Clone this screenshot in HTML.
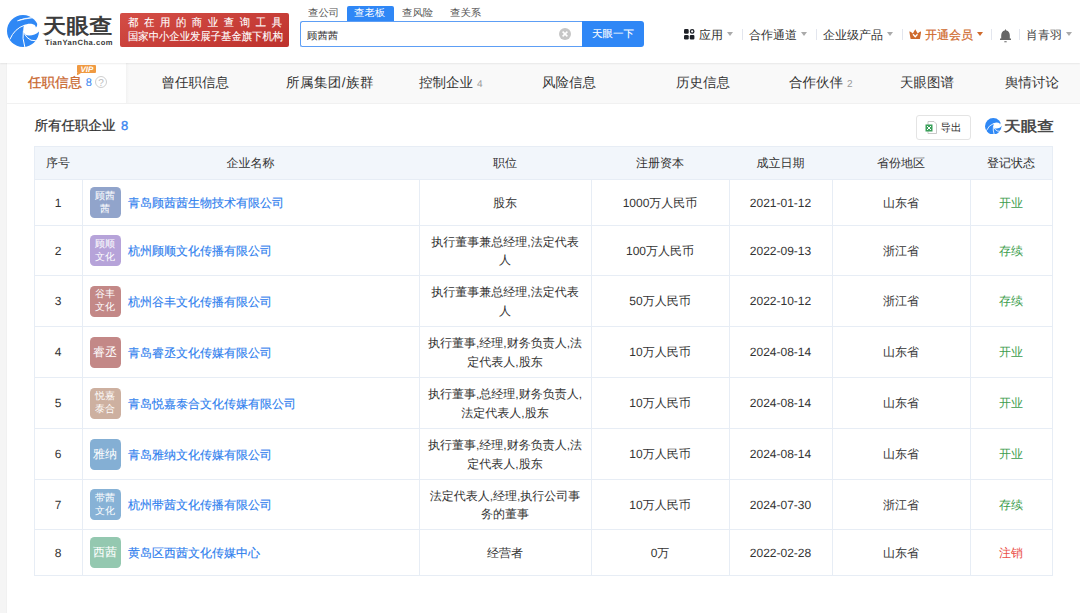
<!DOCTYPE html>
<html><head><meta charset="utf-8">
<style>
*{box-sizing:border-box;margin:0;padding:0}
html,body{width:1080px;height:613px;overflow:hidden;background:#f5f5f5;font-family:"Liberation Sans",sans-serif;color:#333;text-rendering:geometricPrecision}
.abs{position:absolute}
#hdr{position:absolute;left:0;top:0;width:1080px;height:63px;background:#fff;box-shadow:0 1px 1.5px rgba(0,0,0,0.07);z-index:2}
#card{position:absolute;left:7px;top:63px;width:1073px;height:560px;background:#fff;box-shadow:-1px 0 1px rgba(0,0,0,0.015)}
#tabbar{position:absolute;left:7px;top:63px;width:1073px;height:41px;background:#f9f9f9;border-bottom:1px solid #f1f1f1}
.tab{position:absolute;top:63px;height:40px;line-height:40px;font-size:13.5px;color:#333;white-space:nowrap}
.nav{position:absolute;top:24.5px;height:20px;line-height:20px;font-size:12px;color:#333;white-space:nowrap}
.caret{position:absolute;width:0;height:0;border-left:3px solid transparent;border-right:3px solid transparent;border-top:4px solid #aaa}
.sep{position:absolute;top:29px;width:1px;height:11px;background:#e3e6ee}
.hline{position:absolute;left:34px;width:1019px;height:1px;background:#e7edf5}
.vline{position:absolute;width:1px;background:#e7edf5}
.cell{position:absolute;display:flex;align-items:center;justify-content:center;text-align:center;font-size:12px;color:#333;line-height:18.5px}
.cell>span{position:relative;top:0.5px}
.badge{position:absolute;left:89.5px;width:31px;height:31px;border-radius:4.5px;color:#fff;font-size:10px;line-height:13px;display:flex;align-items:center;justify-content:center;text-align:center;padding:0 2px}
.badge.one{font-size:12px}
.name{position:absolute;left:128px;font-size:12px;color:#2f80ee;white-space:nowrap;line-height:16px;-webkit-text-stroke:0.15px #2f80ee}
.g{color:#3d9d4d}.r{color:#ea5048}
</style></head><body>
<div id="hdr">
<!-- logo -->
<svg class="abs" style="left:7px;top:15px" width="32" height="32" viewBox="0 0 32 32">
<circle cx="16" cy="16" r="16" fill="#2f88f5"/>
<path d="M17 10.2 C20 8.3 25 8.2 27.4 9.8 C28.4 10.6 28.9 11.6 28.8 12.5 C29.6 12.2 30.2 10.5 30.4 8.5 L33 8.5 L33 14.7 C31.5 18.5 26 20.6 22 20.5 C19 20.4 17 18.8 16.5 17 C16.1 15 16.3 12.5 17 10.2 Z" fill="#fff"/>
<path d="M2.8 24.5 Q7.5 13.5 17.6 10.2" stroke="#fff" stroke-width="1" fill="none"/>
<path d="M16.4 15.5 Q15 23 17.8 32" stroke="#fff" stroke-width="1" fill="none"/>
<path d="M17.3 18.6 Q19.5 23 24 25.2 Q28.5 26.5 32 24.5" stroke="#fff" stroke-width="1" fill="none"/>
<path d="M10.5 5.8 Q17 2.8 26 2.6 Q17.5 3.8 10.5 5.8 Z" stroke="#fff" stroke-width="0.7" fill="#fff"/>
</svg>
<div class="abs" style="left:43px;top:13px;font-size:20.5px;line-height:28px;font-weight:700;color:#3c3c3c;transform:scaleX(1.13);transform-origin:left top;white-space:nowrap">天眼查</div>
<div class="abs" style="left:45px;top:38px;font-size:7.6px;line-height:10px;font-weight:700;color:#3a3a3a;letter-spacing:0.5px;white-space:nowrap">TianYanCha.com</div>
<!-- red banner -->
<div class="abs" style="left:120px;top:13px;width:169px;height:34px;border-radius:2px;background:linear-gradient(165deg,#d44e46,#bd312c)"></div>
<div class="abs" style="left:128px;top:16px;font-size:11px;line-height:14px;color:#fff;letter-spacing:5.98px;white-space:nowrap;-webkit-text-stroke:0.1px #fff;transform:scaleX(0.94);transform-origin:left top">都在用的商业查询工具</div>
<div class="abs" style="left:128px;top:29.5px;font-size:11px;line-height:14px;color:#fff;white-space:nowrap;-webkit-text-stroke:0.1px #fff;transform:scaleX(0.94);transform-origin:left top">国家中小企业发展子基金旗下机构</div>
<!-- search tabs -->
<div class="abs" style="left:308px;top:6px;font-size:10px;line-height:16px;transform:scaleX(1.04);transform-origin:left top;color:#555">查公司</div>
<div class="abs" style="left:347px;top:6px;width:47px;height:16px;background:#2f87f6;border-radius:2px 2px 0 0"></div>
<div class="abs" style="left:354px;top:6px;font-size:10px;line-height:16px;transform:scaleX(1.04);transform-origin:left top;color:#fff">查老板</div>
<div class="abs" style="left:402px;top:6px;font-size:10px;line-height:16px;transform:scaleX(1.04);transform-origin:left top;color:#555">查风险</div>
<div class="abs" style="left:450px;top:6px;font-size:10px;line-height:16px;transform:scaleX(1.04);transform-origin:left top;color:#555">查关系</div>
<!-- search box -->
<div class="abs" style="left:299.5px;top:21px;width:284.5px;height:26.2px;border:1.5px solid #5d9ef5;border-right:none;border-radius:2.5px 0 0 2.5px;background:#fff"></div>
<div class="abs" style="left:307px;top:28.5px;font-size:10px;line-height:16px;color:#333;transform:scaleX(1.04);transform-origin:left top">顾茜茜</div>
<div class="abs" style="left:559px;top:28px;width:12px;height:12px;border-radius:50%;background:#c6c6c6"></div>
<svg class="abs" style="left:559px;top:28px" width="12" height="12" viewBox="0 0 12 12"><path d="M3.6 3.6 L8.4 8.4 M8.4 3.6 L3.6 8.4" stroke="#fff" stroke-width="1.5"/></svg>
<div class="abs" style="left:582px;top:21px;width:62px;height:26px;background:#2f87f6;border-radius:0 3px 3px 0"></div>
<div class="abs" style="left:592px;top:26.5px;font-size:10px;line-height:16px;color:#fff;transform:scaleX(1.05);transform-origin:left top;-webkit-text-stroke:0.1px #fff">天眼一下</div>
<!-- right nav -->
<svg class="abs" style="left:684px;top:29px" width="11" height="11" viewBox="0 0 11 11">
<rect x="0" y="0.1" width="4.7" height="4.7" rx="1.3" fill="#1d2026"/>
<circle cx="8.15" cy="2.45" r="1.75" fill="none" stroke="#1d2026" stroke-width="1.25"/>
<rect x="0" y="6" width="4.7" height="4.6" rx="1.3" fill="#1d2026"/>
<rect x="5.8" y="6" width="4.6" height="4.6" rx="1.1" fill="#1d2026"/>
</svg>
<div class="nav" style="left:699px">应用</div>
<div class="caret" style="left:727px;top:32px"></div>
<div class="sep" style="left:742px"></div>
<div class="nav" style="left:749px">合作通道</div>
<div class="caret" style="left:801px;top:32px"></div>
<div class="sep" style="left:816px"></div>
<div class="nav" style="left:823px">企业级产品</div>
<div class="caret" style="left:887px;top:32px"></div>
<div class="sep" style="left:902px"></div>
<svg class="abs" style="left:908.5px;top:28.5px" width="12.5" height="10.5" viewBox="0 0 12.5 10.5">
<path d="M0.3 2.6 Q1.2 2.3 2 3 L3.8 4.5 L6.25 0.3 L8.7 4.5 L10.5 3 Q11.3 2.3 12.2 2.6 L11 9.6 Q10.8 10.3 10 10.3 L2.5 10.3 Q1.7 10.3 1.5 9.6 Z" fill="#cf6a2c"/>
<path d="M4 5.2 L6.25 7.8 L8.5 5.2" stroke="#fff" stroke-width="1.3" fill="none"/>
</svg>
<div class="nav" style="left:925px;color:#cf6a2c;-webkit-text-stroke:0.2px #cf6a2c">开通会员</div>
<div class="caret" style="left:977px;top:32px;border-top-color:#cf6a2c"></div>
<div class="sep" style="left:991px"></div>
<svg class="abs" style="left:1000px;top:28.6px" width="11" height="14" viewBox="0 0 11 14">
<path d="M5.5 0 L6.3 1.4 Q9.8 2.2 9.8 6.5 L9.8 9.4 L11 9.6 L11 11 L0 11 L0 9.6 L1.2 9.4 L1.2 6.5 Q1.2 2.2 4.7 1.4 Z" fill="#666"/>
<rect x="4.2" y="12.2" width="2.6" height="1.1" rx="0.5" fill="#666"/>
</svg>
<div class="sep" style="left:1019px"></div>
<div class="nav" style="left:1026px;color:#444">肖青羽</div>
<div class="caret" style="left:1066px;top:32px"></div>

</div>
<div id="card"></div>
<div id="tabbar"></div>
<div class="abs" style="left:7px;top:63px;width:119px;height:40px;background:#fff"></div>
<div class="abs" style="left:126px;top:63px;width:3px;height:40px;background:linear-gradient(90deg,#f2f2f2,#f9f9f9)"></div>
<div class="abs" style="left:77.4px;top:64.5px;width:19px;height:8.3px;background:#f09a42;border-radius:1px"></div>
<svg class="abs" style="left:77.4px;top:72.5px" width="4" height="2.5" viewBox="0 0 4 2.5"><path d="M0 0 L4 0 L0 2.5 Z" fill="#f09a42"/></svg>
<div class="abs" style="left:80.5px;top:65px;font-size:8px;line-height:9px;font-weight:700;font-style:italic;color:#fff;white-space:nowrap">VIP</div>
<div class="tab" style="left:28px;color:#c96830;-webkit-text-stroke:0.3px #c96830">任职信息</div>
<div class="abs" style="left:85.8px;top:76.3px;font-size:11px;line-height:14px;color:#3a86f0">8</div>
<div class="abs" style="left:95px;top:76px;width:12px;height:12px;border:1px solid #cfcfcf;border-radius:50%"></div><div class="abs" style="left:95px;top:76.5px;width:12px;font-size:10px;line-height:14px;text-align:center;color:#bdbdbd">?</div>
<div class="tab" style="left:161.5px">曾任职信息</div>
<div class="tab" style="left:286px;letter-spacing:0.45px">所属集团/族群</div>
<div class="tab" style="left:419px">控制企业<span style="font-size:10px;color:#999;margin-left:4px">4</span></div>
<div class="tab" style="left:542px">风险信息</div>
<div class="tab" style="left:676px">历史信息</div>
<div class="tab" style="left:789px">合作伙伴<span style="font-size:10px;color:#999;margin-left:4px">2</span></div>
<div class="tab" style="left:900px">天眼图谱</div>
<div class="tab" style="left:1005px">舆情讨论</div>
<div class="abs" style="left:34.5px;top:116px;font-size:13.5px;line-height:20px;color:#333;-webkit-text-stroke:0.25px #333;white-space:nowrap">所有任职企业</div>
<div class="abs" style="left:121px;top:115.5px;font-size:13px;line-height:20px;color:#3a86f0;-webkit-text-stroke:0.35px #3a86f0">8</div>
<div class="abs" style="left:916px;top:115px;width:55px;height:25px;border:1px solid #e4e4e4;border-radius:3px;background:#fff"></div>
<svg class="abs" style="left:925px;top:121px" width="12" height="13" viewBox="0 0 12 13">
<path d="M3 0.5 L9 0.5 L11.5 3 L11.5 12.5 L3 12.5 Z" fill="#fff" stroke="#bbb" stroke-width="0.8"/>
<rect x="0.5" y="3.5" width="7" height="7" fill="#3aa05a"/>
<path d="M2 5 L6 9 M6 5 L2 9" stroke="#fff" stroke-width="1"/>
</svg>
<div class="abs" style="left:940.5px;top:119.5px;font-size:10.5px;line-height:16px;color:#333">导出</div>
<svg class="abs" style="left:985px;top:117.5px" width="16.5" height="16.5" viewBox="0 0 32 32">
<circle cx="16" cy="16" r="16" fill="#2f88f5"/>
<path d="M17 10.2 C20 8.3 25 8.2 27.4 9.8 C28.4 10.6 28.9 11.6 28.8 12.5 C29.6 12.2 30.2 10.5 30.4 8.5 L33 8.5 L33 14.7 C31.5 18.5 26 20.6 22 20.5 C19 20.4 17 18.8 16.5 17 C16.1 15 16.3 12.5 17 10.2 Z" fill="#fff"/>
<path d="M2.8 24.5 Q7.5 13.5 17.6 10.2" stroke="#fff" stroke-width="1.6" fill="none"/>
<path d="M16.4 15.5 Q15 23 17.8 32" stroke="#fff" stroke-width="1.6" fill="none"/>
<path d="M17.3 18.6 Q19.5 23 24 25.2 Q28.5 26.5 32 24.5" stroke="#fff" stroke-width="1.6" fill="none"/>
</svg>
<div class="abs" style="left:1003.5px;top:116px;font-size:14px;line-height:20px;font-weight:700;color:#4a4a4a;transform:scaleX(1.19);transform-origin:left top;white-space:nowrap">天眼查</div>

<div class="abs" style="left:34px;top:146px;width:1019px;height:33px;background:#f2f6fb"></div>
<div class="hline" style="top:146px"></div>
<div class="hline" style="top:179px"></div>
<div class="hline" style="top:225px"></div>
<div class="hline" style="top:275px"></div>
<div class="hline" style="top:326px"></div>
<div class="hline" style="top:377px"></div>
<div class="hline" style="top:428px"></div>
<div class="hline" style="top:479px"></div>
<div class="hline" style="top:529px"></div>
<div class="hline" style="top:575px"></div>
<div class="vline" style="left:34px;top:146px;height:430px"></div>
<div class="vline" style="left:82px;top:179px;height:397px"></div>
<div class="vline" style="left:419px;top:179px;height:397px"></div>
<div class="vline" style="left:591px;top:179px;height:397px"></div>
<div class="vline" style="left:729px;top:179px;height:397px"></div>
<div class="vline" style="left:832px;top:179px;height:397px"></div>
<div class="vline" style="left:970px;top:179px;height:397px"></div>
<div class="vline" style="left:1052px;top:146px;height:430px"></div>
<div class="cell" style="left:34px;top:147px;width:48px;height:32px"><span>序号</span></div>
<div class="cell" style="left:82px;top:147px;width:337px;height:32px"><span>企业名称</span></div>
<div class="cell" style="left:419px;top:147px;width:172px;height:32px"><span>职位</span></div>
<div class="cell" style="left:591px;top:147px;width:138px;height:32px"><span>注册资本</span></div>
<div class="cell" style="left:729px;top:147px;width:103px;height:32px"><span>成立日期</span></div>
<div class="cell" style="left:832px;top:147px;width:138px;height:32px"><span>省份地区</span></div>
<div class="cell" style="left:970px;top:147px;width:82px;height:32px"><span>登记状态</span></div>
<div class="cell" style="left:34px;top:180px;width:48px;height:45px"><span>1</span></div>
<div class="badge" style="top:187.0px;background:#91a4cb">顾茜<br>茜</div>
<div class="name" style="top:195.0px">青岛顾茜茜生物技术有限公司</div>
<div class="cell" style="left:419px;top:180px;width:172px;height:45px"><span>股东</span></div>
<div class="cell" style="left:591px;top:180px;width:138px;height:45px"><span>1000万人民币</span></div>
<div class="cell" style="left:729px;top:180px;width:103px;height:45px"><span>2021-01-12</span></div>
<div class="cell" style="left:832px;top:180px;width:138px;height:45px"><span>山东省</span></div>
<div class="cell g" style="left:970px;top:180px;width:82px;height:45px"><span>开业</span></div>
<div class="cell" style="left:34px;top:226px;width:48px;height:49px"><span>2</span></div>
<div class="badge" style="top:235.0px;background:#b6a3d9">顾顺<br>文化</div>
<div class="name" style="top:243.0px">杭州顾顺文化传播有限公司</div>
<div class="cell" style="left:419px;top:226px;width:172px;height:49px"><span>执行董事兼总经理,法定代表<br>人</span></div>
<div class="cell" style="left:591px;top:226px;width:138px;height:49px"><span>100万人民币</span></div>
<div class="cell" style="left:729px;top:226px;width:103px;height:49px"><span>2022-09-13</span></div>
<div class="cell" style="left:832px;top:226px;width:138px;height:49px"><span>浙江省</span></div>
<div class="cell g" style="left:970px;top:226px;width:82px;height:49px"><span>存续</span></div>
<div class="cell" style="left:34px;top:276px;width:48px;height:50px"><span>3</span></div>
<div class="badge" style="top:285.5px;background:#c38887">谷丰<br>文化</div>
<div class="name" style="top:293.5px">杭州谷丰文化传播有限公司</div>
<div class="cell" style="left:419px;top:276px;width:172px;height:50px"><span>执行董事兼总经理,法定代表<br>人</span></div>
<div class="cell" style="left:591px;top:276px;width:138px;height:50px"><span>50万人民币</span></div>
<div class="cell" style="left:729px;top:276px;width:103px;height:50px"><span>2022-10-12</span></div>
<div class="cell" style="left:832px;top:276px;width:138px;height:50px"><span>浙江省</span></div>
<div class="cell g" style="left:970px;top:276px;width:82px;height:50px"><span>存续</span></div>
<div class="cell" style="left:34px;top:327px;width:48px;height:50px"><span>4</span></div>
<div class="badge one" style="top:336.5px;background:#c38887">睿丞</div>
<div class="name" style="top:344.5px">青岛睿丞文化传媒有限公司</div>
<div class="cell" style="left:419px;top:327px;width:172px;height:50px"><span>执行董事,经理,财务负责人,法<br>定代表人,股东</span></div>
<div class="cell" style="left:591px;top:327px;width:138px;height:50px"><span>10万人民币</span></div>
<div class="cell" style="left:729px;top:327px;width:103px;height:50px"><span>2024-08-14</span></div>
<div class="cell" style="left:832px;top:327px;width:138px;height:50px"><span>山东省</span></div>
<div class="cell g" style="left:970px;top:327px;width:82px;height:50px"><span>开业</span></div>
<div class="cell" style="left:34px;top:378px;width:48px;height:50px"><span>5</span></div>
<div class="badge" style="top:387.5px;background:#cdb0a0">悦嘉<br>泰合</div>
<div class="name" style="top:395.5px">青岛悦嘉泰合文化传媒有限公司</div>
<div class="cell" style="left:419px;top:378px;width:172px;height:50px"><span>执行董事,总经理,财务负责人,<br>法定代表人,股东</span></div>
<div class="cell" style="left:591px;top:378px;width:138px;height:50px"><span>10万人民币</span></div>
<div class="cell" style="left:729px;top:378px;width:103px;height:50px"><span>2024-08-14</span></div>
<div class="cell" style="left:832px;top:378px;width:138px;height:50px"><span>山东省</span></div>
<div class="cell g" style="left:970px;top:378px;width:82px;height:50px"><span>开业</span></div>
<div class="cell" style="left:34px;top:429px;width:48px;height:50px"><span>6</span></div>
<div class="badge one" style="top:438.5px;background:#84afd4">雅纳</div>
<div class="name" style="top:446.5px">青岛雅纳文化传媒有限公司</div>
<div class="cell" style="left:419px;top:429px;width:172px;height:50px"><span>执行董事,经理,财务负责人,法<br>定代表人,股东</span></div>
<div class="cell" style="left:591px;top:429px;width:138px;height:50px"><span>10万人民币</span></div>
<div class="cell" style="left:729px;top:429px;width:103px;height:50px"><span>2024-08-14</span></div>
<div class="cell" style="left:832px;top:429px;width:138px;height:50px"><span>山东省</span></div>
<div class="cell g" style="left:970px;top:429px;width:82px;height:50px"><span>开业</span></div>
<div class="cell" style="left:34px;top:480px;width:48px;height:49px"><span>7</span></div>
<div class="badge" style="top:489.0px;background:#87b2d6">带茜<br>文化</div>
<div class="name" style="top:497.0px">杭州带茜文化传播有限公司</div>
<div class="cell" style="left:419px;top:480px;width:172px;height:49px"><span>法定代表人,经理,执行公司事<br>务的董事</span></div>
<div class="cell" style="left:591px;top:480px;width:138px;height:49px"><span>10万人民币</span></div>
<div class="cell" style="left:729px;top:480px;width:103px;height:49px"><span>2024-07-30</span></div>
<div class="cell" style="left:832px;top:480px;width:138px;height:49px"><span>浙江省</span></div>
<div class="cell g" style="left:970px;top:480px;width:82px;height:49px"><span>存续</span></div>
<div class="cell" style="left:34px;top:530px;width:48px;height:45px"><span>8</span></div>
<div class="badge one" style="top:537.0px;background:#94c8b0">西茜</div>
<div class="name" style="top:545.0px">黄岛区西茜文化传媒中心</div>
<div class="cell" style="left:419px;top:530px;width:172px;height:45px"><span>经营者</span></div>
<div class="cell" style="left:591px;top:530px;width:138px;height:45px"><span>0万</span></div>
<div class="cell" style="left:729px;top:530px;width:103px;height:45px"><span>2022-02-28</span></div>
<div class="cell" style="left:832px;top:530px;width:138px;height:45px"><span>山东省</span></div>
<div class="cell r" style="left:970px;top:530px;width:82px;height:45px"><span>注销</span></div>
</body></html>
